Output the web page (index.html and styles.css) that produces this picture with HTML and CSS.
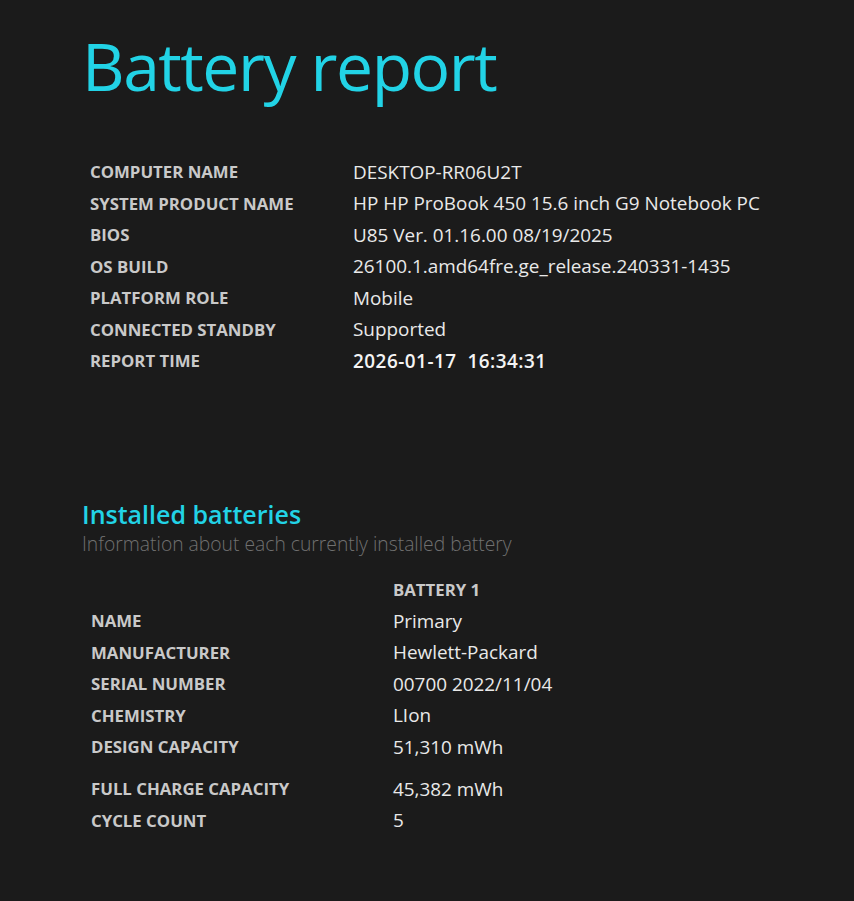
FILE: index.html
```html
<!DOCTYPE html>
<html>
<head>
<meta charset="utf-8">
<link rel="stylesheet" href="styles.css">
</head>
<body>
<main class="page">
  <h1 class="title">Battery report</h1>
  <div class="info">
    <div class="row"><div class="label">COMPUTER NAME</div><div class="value">DESKTOP-RR06U2T</div></div>
    <div class="row"><div class="label">SYSTEM PRODUCT NAME</div><div class="value">HP HP ProBook 450 15.6 inch G9 Notebook PC</div></div>
    <div class="row"><div class="label">BIOS</div><div class="value">U85 Ver. 01.16.00 08/19/2025</div></div>
    <div class="row"><div class="label">OS BUILD</div><div class="value">26100.1.amd64fre.ge_release.240331-1435</div></div>
    <div class="row"><div class="label">PLATFORM ROLE</div><div class="value">Mobile</div></div>
    <div class="row"><div class="label">CONNECTED STANDBY</div><div class="value">Supported</div></div>
    <div class="row"><div class="label">REPORT TIME</div><div class="value strong">2026-01-17&nbsp; 16:34:31</div></div>
  </div>

  <section class="section">
    <h2 class="section-title">Installed batteries</h2>
    <p class="section-sub">Information about each currently installed battery</p>
    <div class="batt">
      <div class="row"><div class="label"></div><div class="label">BATTERY 1</div></div>
      <div class="row"><div class="label">NAME</div><div class="value">Primary</div></div>
      <div class="row"><div class="label">MANUFACTURER</div><div class="value">Hewlett-Packard</div></div>
      <div class="row"><div class="label">SERIAL NUMBER</div><div class="value">00700 2022/11/04</div></div>
      <div class="row"><div class="label">CHEMISTRY</div><div class="value">LIon</div></div>
      <div class="row"><div class="label">DESIGN CAPACITY</div><div class="value">51,310 mWh</div></div>
      <div class="row spaced"><div class="label">FULL CHARGE CAPACITY</div><div class="value">45,382 mWh</div></div>
      <div class="row"><div class="label">CYCLE COUNT</div><div class="value">5</div></div>
    </div>
  </section>
</main>
</body>
</html>
```
FILE: styles.css
```css
html, body {
  margin: 0;
  padding: 0;
  background: #1b1b1b;
}
body {
  font-family: "Open Sans", "Noto Sans", sans-serif;
  color: #e6e6e6;
}
.page {
  padding: 17px 0 0 82px;
}
.title {
  margin: 0;
  font-weight: 400;
  font-size: 66px;
  line-height: 96px;
  color: #22d3e6;
  letter-spacing: -1.5px;
}
.info {
  margin: 43px 0 0 8px;
}
.row {
  display: flex;
  align-items: center;
  height: 31.5px;
}
.info .label {
  width: 263px;
}
.batt .label:first-child {
  width: 302px;
}
.label {
  flex: none;
  font-weight: 700;
  font-size: 16.8px;
  color: #c9c9c9;
  white-space: nowrap;
}
.value {
  font-size: 18.9px;
  color: #e9e9e9;
  white-space: nowrap;
}
.value.strong {
  font-weight: 600;
  color: #f4f4f4;
  letter-spacing: 0.5px;
}
.section {
  margin-top: 122px;
}
.section-title {
  margin: 0;
  font-size: 25px;
  font-weight: 600;
  color: #22d3e6;
  line-height: 30px;
}
.section-sub {
  margin: 0;
  font-size: 19.3px;
  font-weight: 300;
  color: #707070;
  line-height: 30px;
}
.batt {
  margin: 15px 0 0 9px;
}
.row.spaced {
  margin-top: 10.5px;
}
```
